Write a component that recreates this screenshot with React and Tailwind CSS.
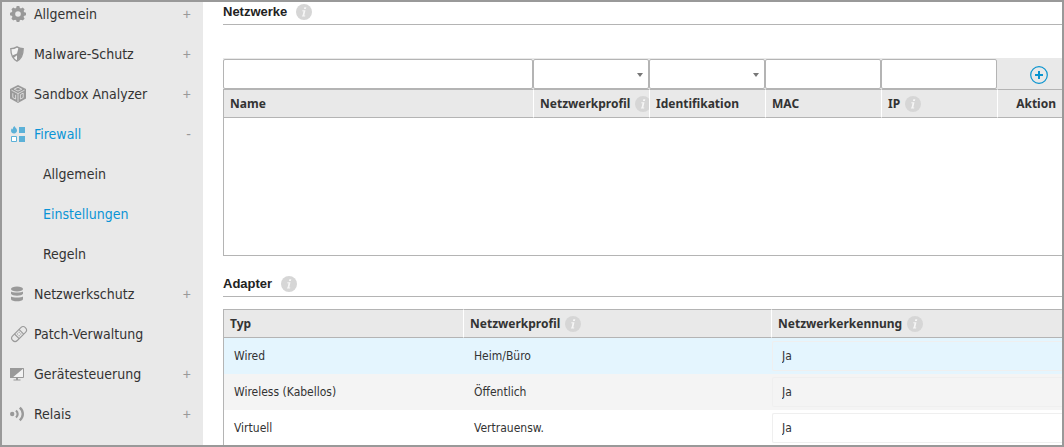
import { useState } from "react";

const NAV = [
  { label: "Allgemein", icon: GearIcon, expandable: true },
  { label: "Malware-Schutz", icon: ShieldIcon, expandable: true },
  { label: "Sandbox Analyzer", icon: SandboxIcon, expandable: true },
  {
    label: "Firewall",
    icon: FirewallIcon,
    expandable: true,
    children: ["Allgemein", "Einstellungen", "Regeln"],
  },
  { label: "Netzwerkschutz", icon: StackIcon, expandable: true },
  { label: "Patch-Verwaltung", icon: PatchIcon },
  { label: "Gerätesteuerung", icon: MonitorIcon, expandable: true },
  { label: "Relais", icon: RelayIcon, expandable: true },
];

const ADAPTERS = [
  { type: "Wired", profile: "Heim/Büro", discovery: "Ja", bg: "bg-[#e4f5fe]" },
  { type: "Wireless (Kabellos)", profile: "Öffentlich", discovery: "Ja", bg: "bg-[#f4f4f4]" },
  { type: "Virtuell", profile: "Vertrauensw.", discovery: "Ja", bg: "bg-white" },
];

function GearIcon() {
  return (
    <svg viewBox="0 0 16 16" className="size-4" aria-hidden="true">
      <g fill="#999">
        {[0, 45, 90, 135].map((a) => (
          <path key={a} d="M6 2.4 6.700 0h2.600l.7 2.4v11.200L9.300 16H6.700L6 13.600z" transform={`rotate(${a} 8 8)`} />
        ))}
        <circle cx="8" cy="8" r="6.300" />
      </g>
      <circle cx="8" cy="8" r="2.800" fill="#e9e9e9" />
    </svg>
  );
}

function ShieldIcon() {
  return (
    <svg viewBox="0 0 16 16" className="size-4" aria-hidden="true">
      <path d="M7 .9C5.200 2.100 3 2.700.8 2.700c0 5.600 1.400 9.800 6.200 12.400 4.800-2.600 6.200-6.800 6.200-12.400C11 2.700 8.800 2.100 7 .9z" fill="#f3f3f3" stroke="#999" strokeWidth="1.300" />
      <path d="M8.500 1.800c1.400.6 2.800 1 4.500 1 .1 5.400-1.200 9.300-6 12.100V9.300L3.500 12c-.6-.9-.9-1.700-1.100-2.500L7 7.400z" fill="#999" />
    </svg>
  );
}

function SandboxIcon() {
  return (
    <svg viewBox="0 0 16 18" className="h-[18px] w-4" aria-hidden="true">
      <path d="M8 0l8 4v9.500L8 18l-8-4.500V4z" fill="#999" />
      <g fill="none" stroke="#e9e9e9" strokeWidth=".8">
        <path d="M1.500 5.200 8 8.600l6.500-3.400M8 8.600V17" />
        <path d="M4.200 4.200 8 2.300l3.800 1.900L8 6.100z" />
        <path d="M2.800 8.200v4.300l2.800 1.600V9.800M10.400 14.100V9.600l2.800-1.500v4.400z" />
      </g>
    </svg>
  );
}

function FirewallIcon() {
  return (
    <svg viewBox="0 0 16 16" className="size-4" aria-hidden="true">
      <path d="M9 1h6v6H9zM9 10h6v6H9z" fill="#5cb1d8" />
      <path d="M1.500 10.500h5v5h-5z" fill="#fff" stroke="#5cb1d8" />
      <path d="M4.500 0c.2 1.300 2.500 2.300 2.500 4.500C7 6.300 5.800 7.400 4.100 7.400 2.300 7.400 1 6.300 1 4.700c0-1 .4-1.800 1-2.400.1.700.3 1.100.8 1.300C2.700 2.100 3.300.8 4.500 0z" fill="#5cb1d8" />
    </svg>
  );
}

function StackIcon() {
  return (
    <svg viewBox="0 0 16 16" className="size-4" fill="#999" aria-hidden="true">
      <ellipse cx="7" cy="3" rx="6" ry="2.500" />
      <path d="M1 5.500c1.500 1.400 10.500 1.400 12 0v2.200c-.8 2.600-11.200 2.600-12 0z" />
      <path d="M1 10.500c1.500 1.400 10.500 1.400 12 0v2.800c-.8 2.700-11.200 2.700-12 0z" />
    </svg>
  );
}

function PatchIcon() {
  return (
    <svg viewBox="0 0 16 16" className="size-4 overflow-visible" aria-hidden="true">
      <g transform="rotate(-45 9 8)" fill="none" stroke="#999" strokeWidth="1.100">
        <rect x="0" y="4.800" width="18" height="6.600" rx="3.200" />
        <path d="M5.800 4.800v6.600M12.200 4.800v6.600" />
        <path d="M7.300 6.900h1.200M9.700 6.900h1.200M7.300 9.300h1.200M9.700 9.300h1.200" />
      </g>
    </svg>
  );
}

function MonitorIcon() {
  return (
    <svg viewBox="0 0 16 16" className="size-4" aria-hidden="true">
      <path d="M.5 2.500h13v9H.5z" fill="#f3f3f3" stroke="#999" />
      <path d="M0 2h14L2 12H0zM6 12h2v1.500h2.500v1h-7v-1H6z" fill="#999" />
    </svg>
  );
}

function RelayIcon() {
  return (
    <svg viewBox="0 0 16 16" className="size-4" fill="none" stroke="#999" aria-hidden="true">
      <circle cx="2.200" cy="8" r="2.200" fill="#999" stroke="none" />
      <path d="M6 4.500c2.200 2 2.200 5 0 7" strokeWidth="2.200" />
      <path d="M9.800 1.700c4 3.600 4 9 0 12.600" strokeWidth="2.400" />
    </svg>
  );
}

function InfoIcon() {
  return (
    <svg viewBox="0 0 16 16" className="size-4 shrink-0" aria-hidden="true">
      <circle cx="8" cy="8" r="8" fill="#d6d6d6" />
      <path d="M8.300 3.200h2l-.4 1.800h-2zM6.400 6.200h3.100l-1.200 5.200h1l-.2 1H5.900l.2-1h.5l.9-4.200H6.200z" fill="#f6f6f6" />
    </svg>
  );
}

function NavItem({ item, open, onToggle }) {
  const Icon = item.icon;
  const active = Boolean(item.children);
  return (
    <li className="flex flex-col gap-4">
      <button
        type="button"
        onClick={onToggle}
        aria-expanded={item.expandable ? open : undefined}
        className={`flex h-6 w-full items-center gap-2 pr-3 pl-2 text-left ${active ? "text-[#0a94d6]" : "text-[#333]"}`}
      >
        <Icon />
        <span className="flex-1">{item.label}</span>
        {item.expandable && (
          <span className="font-['Liberation_Sans'] text-[#999]">{open ? "-" : "+"}</span>
        )}
      </button>
      {open && item.children && (
        <ul className="flex flex-col gap-4">
          {item.children.map((child) => (
            <li key={child} className="flex h-6 items-center pl-[41px]">
              <a href="#" className={child === "Einstellungen" ? "text-[#0a94d6]" : "text-[#333]"}>
                {child}
              </a>
            </li>
          ))}
        </ul>
      )}
    </li>
  );
}

function SectionTitle({ children }) {
  return (
    <h2 className="flex h-[23px] items-center gap-[9px] border-b border-[#b4b4b4] pb-0.5 font-['Liberation_Sans',sans-serif] text-[13px] font-bold text-[#222]">
      {children}
      <InfoIcon />
    </h2>
  );
}

function HeadCell({ children, info, first, right }) {
  return (
    <th
      scope="col"
      className={`h-[29px] border-y border-l border-y-[#b4b4b4] bg-[#e9e9e9] p-0 font-['Noto_Sans',sans-serif] font-bold ${first ? "border-l-[#b4b4b4]" : "border-l-white"}`}
    >
      <div className={`flex items-center gap-[5px] overflow-hidden pl-1.5 ${right ? "justify-end pr-1.5" : ""}`}>
        {children}
        {info && <InfoIcon />}
      </div>
    </th>
  );
}

function FilterSelect({ label }) {
  return (
    <div className="relative">
      <select aria-label={label} className="block h-[30px] w-full appearance-none rounded-xs border border-[#b4b4b4] bg-white px-2">
        <option></option>
        <option>Heim/Büro</option>
        <option>Öffentlich</option>
      </select>
      <svg viewBox="0 0 6 4" className="pointer-events-none absolute top-3.5 right-1.5 h-1 w-1.5" aria-hidden="true">
        <path d="M0 0h6L3 4z" fill="#777" />
      </svg>
    </div>
  );
}

function FilterInput({ label }) {
  return (
    <input type="text" aria-label={label} className="block h-[30px] w-full rounded-xs border border-[#b4b4b4] bg-white px-2" />
  );
}

function NetworksTable() {
  return (
    <table className="w-full table-fixed border-separate border-spacing-0 text-left">
      <colgroup>
        <col />
        <col className="w-[116px]" />
        <col className="w-[116px]" />
        <col className="w-[116px]" />
        <col className="w-[116px]" />
        <col className="w-[65px]" />
      </colgroup>
      <thead>
        <tr className="bg-[#e9e9e9]">
          <td className="p-0 pt-px"><FilterInput label="Name" /></td>
          <td className="p-0 pt-px"><FilterSelect label="Netzwerkprofil" /></td>
          <td className="p-0 pt-px"><FilterSelect label="Identifikation" /></td>
          <td className="p-0 pt-px"><FilterInput label="MAC" /></td>
          <td className="p-0 pt-px"><FilterInput label="IP" /></td>
          <td className="p-0 pt-0.5 pl-[18px]">
            <button type="button" aria-label="Hinzufügen" className="mx-auto block">
              <svg viewBox="0 0 18 18" className="size-[18px]" fill="none" stroke="#0a94cf" aria-hidden="true">
                <circle cx="9" cy="9" r="8.300" strokeWidth="1.200" />
                <path d="M9 5v8M5 9h8" strokeWidth="2" />
              </svg>
            </button>
          </td>
        </tr>
        <tr>
          <HeadCell first>Name</HeadCell>
          <HeadCell info>Netzwerkprofil</HeadCell>
          <HeadCell>Identifikation</HeadCell>
          <HeadCell>MAC</HeadCell>
          <HeadCell info>IP</HeadCell>
          <HeadCell right>Aktion</HeadCell>
        </tr>
      </thead>
      <tbody>
        <tr>
          <td colSpan={6} className="h-[138px] border-b border-l border-[#b4b4b4]"></td>
        </tr>
      </tbody>
    </table>
  );
}

function AdaptersTable() {
  return (
    <table className="w-full table-fixed border-separate border-spacing-0 text-left">
      <colgroup>
        <col className="w-[240px]" />
        <col className="w-[308px]" />
        <col />
      </colgroup>
      <thead>
        <tr>
          <HeadCell first>Typ</HeadCell>
          <HeadCell info>Netzwerkprofil</HeadCell>
          <HeadCell info>Netzwerkerkennung</HeadCell>
        </tr>
      </thead>
      <tbody>
        {ADAPTERS.map((row) => (
          <tr key={row.type} className={row.bg}>
            <td className="h-9 border-l border-[#b4b4b4] p-0 pl-2.5">{row.type}</td>
            <td className="h-9 p-0 pl-[11px]">{row.profile}</td>
            <td className="h-9 p-0 pl-px">
              <select
                aria-label={`Netzwerkerkennung ${row.type}`}
                defaultValue={row.discovery}
                className="block h-[30px] w-full appearance-none rounded-l-xs border border-r-0 border-[#efefef] bg-transparent pl-[9px]"
              >
                <option>Ja</option>
                <option>Nein</option>
              </select>
            </td>
          </tr>
        ))}
      </tbody>
    </table>
  );
}

export default function App() {
  const [open, setOpen] = useState("Firewall");

  return (
    <div className="flex h-screen overflow-hidden border-2 border-[#999] bg-white font-['DejaVu_Sans_Condensed','Noto_Sans',sans-serif] text-xs text-[#333]">
      <nav className="w-[201px] shrink-0 bg-[#e9e9e9] text-sm">
        <ul className="flex flex-col gap-4">
          {NAV.map((item) => (
            <NavItem
              key={item.label}
              item={item}
              open={open === item.label}
              onToggle={() => setOpen(open === item.label ? "" : item.label)}
            />
          ))}
        </ul>
      </nav>
      <main className="min-w-0 flex-1 pl-5">
        <section>
          <SectionTitle>Netzwerke</SectionTitle>
          <div className="pt-[33px]">
            <NetworksTable />
          </div>
        </section>
        <section className="pt-[18px]">
          <SectionTitle>Adapter</SectionTitle>
          <div className="pt-3">
            <AdaptersTable />
          </div>
        </section>
      </main>
    </div>
  );
}
